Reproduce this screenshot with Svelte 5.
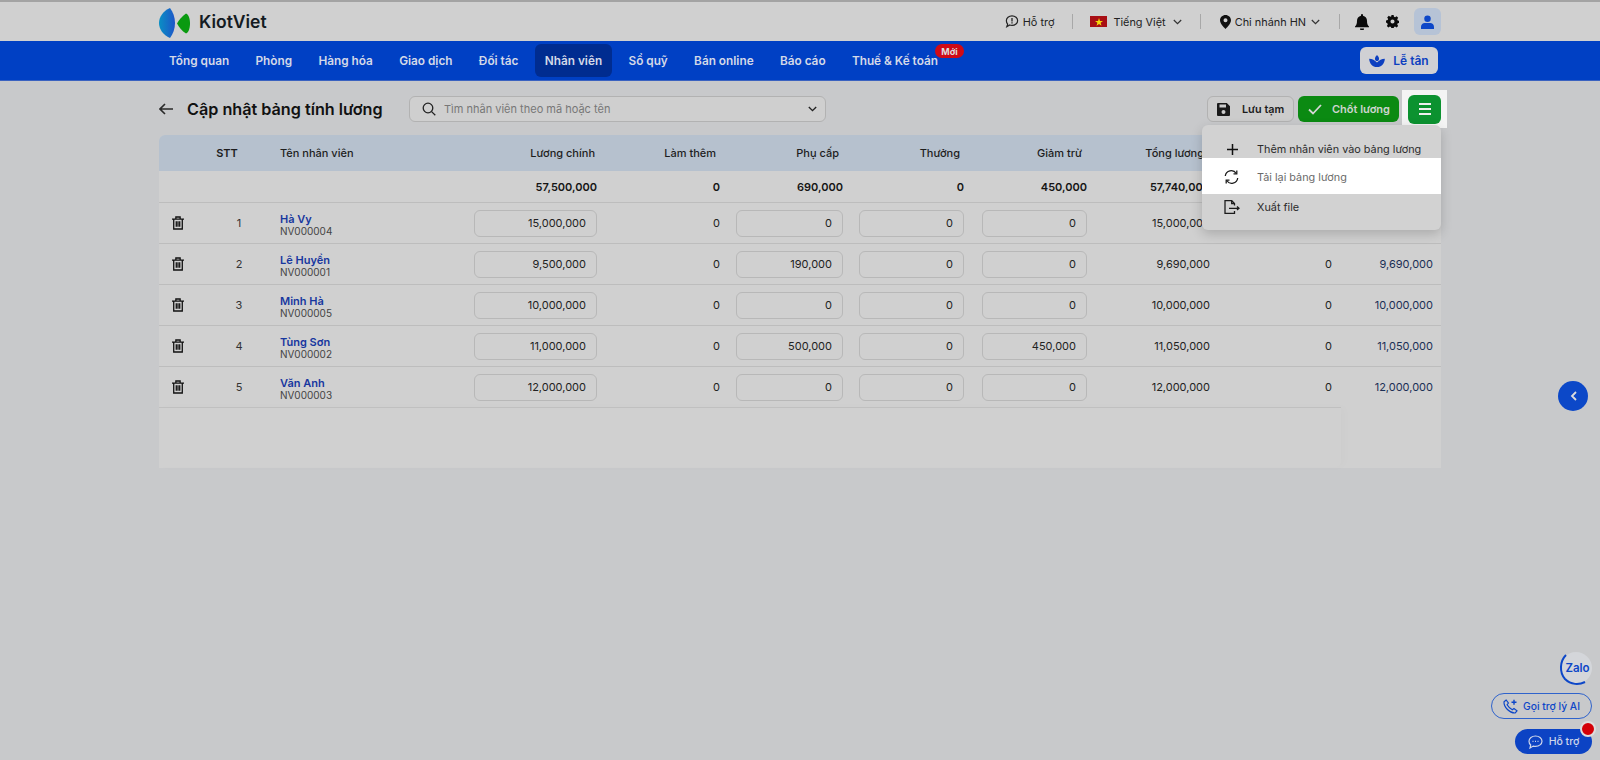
<script>
  const nav = ['Tổng quan','Phòng','Hàng hóa','Giao dịch','Đối tác','Nhân viên','Sổ quỹ','Bán online','Báo cáo','Thuế & Kế toán'];
  const rows = [
    {n:1,name:'Hà Vy',code:'NV000004',main:'15,000,000',extra:'0',sum:'15,000,000',ded:'0',total:'15,000,000'},
    {n:2,name:'Lê Huyền',code:'NV000001',main:'9,500,000',extra:'190,000',sum:'9,690,000',ded:'0',total:'9,690,000'},
    {n:3,name:'Minh Hà',code:'NV000005',main:'10,000,000',extra:'0',sum:'10,000,000',ded:'0',total:'10,000,000'},
    {n:4,name:'Tùng Sơn',code:'NV000002',main:'11,000,000',extra:'500,000',sum:'11,050,000',ded:'450,000',total:'11,050,000'},
    {n:5,name:'Văn Anh',code:'NV000003',main:'12,000,000',extra:'0',sum:'12,000,000',ded:'0',total:'12,000,000'}
  ];
</script>

<div class="page">
  <header class="top">
    <div class="wrap top-in">
      <div class="logo">
        <svg width="32" height="31" viewBox="0 0 32 31">
          <defs><linearGradient id="lg" x1="0" y1="0" x2="1" y2="0"><stop offset="0" stop-color="#0a8fc4"/><stop offset="1" stop-color="#1d55c8"/></linearGradient></defs>
          <path d="M11 0C4 3 0 9 0 15s4 12 11 15c3-4 5-9 5-15S14 4 11 0z" fill="url(#lg)"/>
          <path d="M27 5.500C23 8 20 12 18 15.500 20 19 23 23 27 25.500 29.500 25 31 20 31 15.500S29.500 6 27 5.500z" fill="#0a9a10"/>
        </svg>
        <span>KiotViet</span>
      </div>
      <div class="tools">
        <span class="tool t-help">
          <svg width="14" height="13" viewBox="0 0 16 15" fill="none" stroke="#222" stroke-width="1.400"><path d="M8 1c3.600 0 6.500 2.400 6.500 5.500S11.600 12 8 12c-.9 0-1.800-.15-2.600-.45L2 13.500l1-3C2 9.300 1.500 7.900 1.500 6.500 1.500 3.400 4.400 1 8 1z"/><path d="M8 3.600v3.800M8 8.500v1.300" stroke-width="1.500"/></svg>
          Hỗ trợ
        </span>
        <i class="sep"></i>
        <span class="tool t-lang">
          <span class="flag"><svg width="8" height="8" viewBox="0 0 10 10"><path d="M5 0l1.200 3.600H10L7 5.900 8.100 9.600 5 7.400 1.900 9.600 3 5.900 0 3.600h3.800z" fill="#f5d90a"/></svg></span>
          Tiếng Việt
          <svg class="chev" width="9" height="6" viewBox="0 0 11 7" fill="none" stroke="#333" stroke-width="1.500"><path d="M1 1l4.500 4.500L10 1"/></svg>
        </span>
        <i class="sep s2"></i>
        <span class="tool t-branch">
          <svg width="11" height="14" viewBox="0 0 11 14"><path fill-rule="evenodd" d="M5.500 0C2.500 0 0 2.400 0 5.300 0 9 5.500 14 5.500 14S11 9 11 5.300C11 2.400 8.500 0 5.500 0zm0 7.300a2 2 0 110-4 2 2 0 010 4z" fill="#111"/></svg>
          Chi nhánh HN
          <svg class="chev" width="9" height="6" viewBox="0 0 11 7" fill="none" stroke="#333" stroke-width="1.500"><path d="M1 1l4.500 4.500L10 1"/></svg>
        </span>
        <i class="sep s3"></i>
        <svg class="bell" width="14" height="16" viewBox="0 0 14 16"><path d="M7 0a1 1 0 011 1v.7c2.500.5 4 2.500 4 5 0 3 .6 4.300 2 5.800v.7H0v-.7c1.400-1.500 2-2.800 2-5.800 0-2.500 1.500-4.500 4-5V1a1 1 0 011-1zM5 14.500h4a2 2 0 01-4 0z" fill="#0b0b0b"/></svg>
        <svg class="gear" width="13" height="13" viewBox="0 0 14 14"><path fill-rule="evenodd" d="M5.800 0h2.400l.4 1.800 1.200.5 1.600-1 1.700 1.700-1 1.600.5 1.200 1.800.4v2.400l-1.800.4-.5 1.200 1 1.600-1.700 1.700-1.600-1-1.200.5-.4 1.800H5.800l-.4-1.800-1.200-.5-1.600 1-1.700-1.700 1-1.600-.5-1.200L0 8.200V5.800l1.800-.4.500-1.200-1-1.600L3 .9l1.600 1 1.200-.5zM7 4.800a2.200 2.200 0 100 4.400 2.200 2.200 0 000-4.400z" fill="#0b0b0b"/></svg>
        <span class="avatar">
          <svg width="13" height="14" viewBox="0 0 14 15"><circle cx="7" cy="4" r="3.500" fill="#0d47c8"/><path d="M0 15v-2.500C0 10 2 8.500 4 8.500h6c2 0 4 1.500 4 4V15z" fill="#0d47c8"/></svg>
        </span>
      </div>
    </div>
  </header>

  <nav class="nav">
    <div class="wrap nav-in">
      <ul>
        {#each nav as item}
          <li class:active={item === 'Nhân viên'}>
            {item}
            {#if item === 'Thuế & Kế toán'}<b class="new">Mới</b>{/if}
          </li>
        {/each}
      </ul>
      <span class="reception">
        <svg width="16" height="12" viewBox="0 0 17 13"><path d="M8.500 0c1.300 1.300 2.200 2.700 2.200 4.200 0 1.300-1 2.400-2.200 2.400S6.300 5.500 6.300 4.200C6.300 2.700 7.200 1.300 8.500 0z" fill="#0d3fc0"/><path d="M0 4c3.500 0 6 1.500 8.500 4C11 5.500 13.500 4 17 4c-.3 5-3.500 9-8.500 9S.3 9 0 4z" fill="#0d3fc0"/></svg>
        Lễ tân
      </span>
    </div>
  </nav>

  <main class="wrap">
    <div class="titlebar">
      <svg class="back" width="14" height="12" viewBox="0 0 14 12" fill="none" stroke="#2a2a2a" stroke-width="1.600"><path d="M14 6H1.500M6 1L1 6l5 5"/></svg>
      <h1>Cập nhật bảng tính lương</h1>
      <div class="search">
        <svg width="14" height="14" viewBox="0 0 14 14" fill="none" stroke="#222" stroke-width="1.300"><circle cx="6" cy="6" r="4.800"/><path d="M9.600 9.600L13.300 13.300"/></svg>
        <span>Tìm nhân viên theo mã hoặc tên</span>
        <svg class="chev" width="9" height="6" viewBox="0 0 11 7" fill="none" stroke="#222" stroke-width="1.700"><path d="M1 1l4.500 4.500L10 1"/></svg>
      </div>
      <div class="actions">
        <span class="btn save">
          <svg width="13" height="13" viewBox="0 0 13 13"><path fill-rule="evenodd" d="M1 0h8.800L13 3.200V12a1 1 0 01-1 1H1a1 1 0 01-1-1V1a1 1 0 011-1zm1.500 1.500v3h6.500v-3zM6.500 7a2 2 0 100 4 2 2 0 000-4z" fill="#1a1a1a"/></svg>
          Lưu tạm
        </span>
        <span class="btn done">
          <svg width="14" height="11" viewBox="0 0 14 11" fill="none" stroke="#d6d6d6" stroke-width="1.800"><path d="M1 5.500L5 9.500 13 1"/></svg>
          Chốt lương
        </span>
        <span class="spot">
          <span class="burger"><i></i><i></i><i></i></span>
        </span>
      </div>
    </div>

    <section class="table">
      <div class="row head">
        <div></div><div class="c">STT</div><div class="nm">Tên nhân viên</div>
        <div class="r">Lương chính</div><div class="r">Làm thêm</div><div class="r">Phụ cấp</div><div class="r">Thưởng</div><div class="r">Giảm trừ</div><div class="r">Tổng lương</div>
      </div>
      <div class="row totals">
        <div></div><div></div><div></div>
        <div class="v">57,500,000</div><div class="v">0</div><div class="v">690,000</div><div class="v">0</div><div class="v">450,000</div><div class="v">57,740,000</div><div class="v">0</div><div class="v">57,740,000</div>
      </div>
      {#each rows as r}
        <div class="row item">
          <div class="trash">
            <svg width="12" height="14" viewBox="0 0 14 16" fill="none" stroke="#111" stroke-width="1.500"><path d="M0 3.500h14M4.500 3.500V1h5v2.500M2 3.500V15h10V3.500"/><path d="M5 6v6.500M7 6v6.500M9 6v6.500"/></svg>
          </div>
          <div class="c n">{r.n}</div>
          <div class="nm"><a href="#top">{r.name}</a><small>{r.code}</small></div>
          <div class="v"><span class="inp wide">{r.main}</span></div>
          <div class="v">0</div>
          <div class="v"><span class="inp m">{r.extra}</span></div>
          <div class="v"><span class="inp">0</span></div>
          <div class="v"><span class="inp">{r.ded}</span></div>
          <div class="v">{r.sum}</div>
          <div class="v">0</div>
          <div class="v last">{r.total}</div>
        </div>
      {/each}
      <div class="blank"><div class="blank-left"></div></div>

      <div class="menu">
        <div class="mi first">
          <svg class="plus" width="11" height="11" viewBox="0 0 11 11" fill="none" stroke="#111" stroke-width="1.500"><path d="M5.500 0v11M0 5.500h11"/></svg>
          Thêm nhân viên vào bảng lương
        </div>
        <div class="mi hl">
          <svg width="15" height="14" viewBox="0 0 15 14" fill="none" stroke="#1c1c1c" stroke-width="1.300"><path d="M1.300 6A6 6 0 0112.300 3.500M13.700 8A6 6 0 012.700 10.500"/><path d="M12.800 .5v3.300H9.500M2.200 13.500v-3.300h3.300"/></svg>
          Tải lại bảng lương
        </div>
        <div class="mi">
          <svg width="16" height="14" viewBox="0 0 16 14" fill="none" stroke="#1c1c1c" stroke-width="1.300"><path d="M10.500 5.500V3.500L7.700 .7H1V13.300h9.500v-2.300"/><path d="M7.700 .7v3h2.800M5 8.300h10M13 6.500l2 1.800-2 1.800"/></svg>
          Xuất file
        </div>
      </div>
    </section>
  </main>

  <button class="side" aria-label="Mở">
    <svg width="7" height="10" viewBox="0 0 7 10" fill="none" stroke="#ddd" stroke-width="1.800"><path d="M6 1L2 5l4 4"/></svg>
  </button>

  <div class="float">
    <span class="zalo"><svg class="arc" width="34" height="34" viewBox="0 0 34 34" fill="none" stroke="#0d47c8" stroke-width="2"><path d="M7 3C1 9 0 20 6 27c6 6 14 6 20 3"/></svg><em>Zalo</em></span>
    <span class="ai">
      <svg width="15" height="15" viewBox="0 0 15 15" fill="none" stroke="#0d47c8" stroke-width="1.200"><path d="M3.200 1L1 2.800c-.3 5.400 5.700 11.500 11.200 11.200l1.800-2.200-3-2.300-1.700 1.300C7.800 10 5 7.200 4.100 5.700L5.400 4z"/><path d="M11 .8v5M8.500 3.300h5" stroke-width="1.400"/></svg>
      Gọi trợ lý AI
    </span>
    <span class="help">
      <svg width="15" height="14" viewBox="0 0 15 14" fill="none" stroke="#cfd6ea" stroke-width="1.200"><path d="M7.500 1c3.600 0 6.500 2.300 6.500 5.200s-2.900 5.200-6.500 5.200c-.8 0-1.600-.1-2.300-.3L2 13l.7-3C1.600 9 1 7.700 1 6.200 1 3.300 3.900 1 7.500 1z"/><path d="M4.500 6.300h1M7 6.300h1M9.500 6.300h1"/></svg>
      Hỗ trợ
      <b class="dot"></b>
    </span>
  </div>
</div>

<style>
  :global(body) { margin: 0; background: #c8c9cb; }
  .page { height: 760px; overflow: hidden; position: relative; font-family: Inter, "Noto Sans", sans-serif; color: #1a1a1a; background: #c8c9cb; font-size: 11px; }
  .wrap { width: 1282px; margin: 0 auto; }

  .top { height: 39px; background: #d0d0d0; border-top: 2px solid #a3a3a3; }
  .top-in { height: 39px; display: flex; align-items: center; justify-content: space-between; }
  .logo { display: flex; align-items: center; gap: 8px; }
  .logo svg { margin-top: 3px; }
  .logo span { font-size: 17.500px; font-weight: 600; color: #141b22; }
  .tools { display: flex; align-items: center; color: #222; font-size: 10.900px; }
  .tool { display: flex; align-items: center; gap: 4px; white-space: nowrap; }
  .t-lang { gap: 6px; }
  .t-branch { gap: 4px; }
  .sep { width: 1px; height: 15px; background: #a8a8a8; margin: 0 17px 0 18px; }
  .sep.s2 { margin: 0 19px 0 18px; }
  .sep.s3 { margin: 0 15px 0 19px; }
  .flag { width: 17px; height: 11px; background: #a80f14; display: flex; align-items: center; justify-content: center; }
  .chev { flex: none; }
  .tool .chev { margin-left: 1px; }
  .gear { margin-left: 17px; }
  .avatar { width: 27px; height: 27px; margin-left: 15px; border-radius: 6px; background: #b6c3d6; display: flex; align-items: center; justify-content: center; }

  .nav { height: 39px; background: #0040c4; border-bottom: 1px solid #3a62c0; }
  .nav-in { height: 39px; display: flex; align-items: center; justify-content: space-between; }
  .nav ul { list-style: none; margin: 0; padding: 0; display: flex; align-items: center; }
  .nav li { position: relative; height: 33px; padding: 0 10px; margin-right: 6.300px; display: flex; align-items: center; color: #d4d9e8; font-weight: 600; font-size: 11.800px; border-radius: 6px; white-space: nowrap; }
  .nav li.active { background: #002c90; }
  .new { position: absolute; right: -16px; top: 0; width: 29px; height: 14px; border-radius: 7px; background: #d00a16; color: #ddd; font-size: 9px; font-weight: 700; display: flex; align-items: center; justify-content: center; }
  .reception { height: 27px; width: 78px; margin-right: 3px; border-radius: 6px; background: #d0d0d4; display: flex; align-items: center; justify-content: center; gap: 8px; color: #0d3fc0; font-weight: 600; font-size: 12px; }

  .titlebar { height: 54px; box-sizing: border-box; padding-top: 2px; display: flex; align-items: center; position: relative; }
  h1 { margin: 0 0 0 14px; font-size: 16.200px; font-weight: 600; color: #111; width: 222px; white-space: nowrap; }
  .search { width: 417px; height: 26px; box-sizing: border-box; border: 1px solid #b2b2b2; border-radius: 6px; background: #cfcfcf; display: flex; align-items: center; padding: 0 8px 0 12px; gap: 8px; color: #777; font-size: 11px; }
  .search span { flex: 1; }
  .actions { margin-left: auto; display: flex; align-items: center; height: 26px; }
  .btn { height: 26px; box-sizing: border-box; border-radius: 6px; display: flex; align-items: center; font-weight: 600; font-size: 10.800px; white-space: nowrap; }
  .save { width: 87px; background: #cccccc; border: 1px solid #b2b2b2; padding-left: 9px; gap: 12px; color: #1c1c1c; }
  .done { width: 101px; margin-left: 4px; background: #0b8a12; color: #cfd4cf; padding-left: 10px; gap: 10px; font-size: 11px; }
  .spot { margin-left: 3px; margin-right: -6px; width: 45px; height: 38px; background: #f4f4f4; display: flex; align-items: center; justify-content: center; }
  .burger { width: 33px; height: 29px; border-radius: 6px; background: #0c9230; display: flex; flex-direction: column; align-items: center; justify-content: center; gap: 3px; }
  .burger i { width: 12px; height: 2px; background: #eee; }

  .table { position: relative; height: 333px; background: #d0d0d0; border-radius: 6px 6px 0 0; }
  .row { display: grid; grid-template-columns: 41px 62px 208px 127px 123px 123px 121px 123px 123px 122px 101px 8px; align-items: center; }
  .head { grid-template-columns: 41px 62px 208px 125px 121px 123px 121px 122px 122px; height: 36px; background: #b6c1ce; border-radius: 6px 6px 0 0; font-weight: 500; color: #1d1d1d; }
  .head .r { text-align: right; white-space: nowrap; }
  .c { text-align: center; }
  .head .c { font-weight: 600; padding-right: 8px; }
  .nm { padding-left: 18px; }
  .n { color: #333; padding-left: 16px; }
  .totals { height: 32px; box-sizing: border-box; border-bottom: 1px solid #bdbdbd; }
  .v { text-align: right; white-space: nowrap; color: #222; }
  .totals .v { font-weight: 600; color: #151515; }
  .item { height: 41px; box-sizing: border-box; border-bottom: 1px solid #bdbdbd; }
  .item:nth-last-child(3) { border-bottom: 0; height: 40px; }
  .trash { display: flex; justify-content: center; padding-right: 4px; }
  .item .nm { padding-top: 5px; }
  .nm a { display: block; color: #17379f; font-weight: 600; line-height: 11px; text-decoration: none; }
  .nm small { display: block; color: #444; font-size: 10px; line-height: 13px; }
  .inp { display: inline-block; box-sizing: border-box; width: 105px; height: 27px; line-height: 25px; padding-right: 10px; border: 1px solid #b8b8b8; border-radius: 6px; background: #d0d0d0; text-align: right; }
  .inp.wide { width: 123px; }
  .inp.m { width: 107px; }
  .last { color: #1b2f55; }
  .blank { height: 60px; }
  .blank-left { width: 1182px; height: 60px; border-radius: 0 0 6px 0; box-shadow: 4px 0 8px rgba(0,0,0,.015); border-top: 1px solid #c0c0c0; box-sizing: border-box; }

  .menu { position: absolute; right: 0; top: -10px; width: 239px; height: 105px; background: #d2d2d2; border-radius: 6px; box-shadow: 0 4px 12px rgba(0,0,0,.18); padding-top: 13px; box-sizing: border-box; color: #2b2b2b; font-size: 10.850px; z-index: 2; }
  .mi { height: 20px; display: flex; align-items: center; position: relative; padding-left: 55px; white-space: nowrap; }
  .mi svg { position: absolute; left: 22px; }
  .mi svg.plus { left: 25px; }
  .mi.first { padding-top: 2px; box-sizing: border-box; }
  .mi.hl { height: 36px; background: #fff; color: #6a6a6a; padding-top: 2px; box-sizing: border-box; }
  .mi:last-child { height: 26px; }

  .side { position: absolute; left: 1558px; top: 381px; width: 30px; height: 30px; padding: 0; border: 0; border-radius: 50%; background: #0c48c8; display: flex; align-items: center; justify-content: center; }

  .float { position: absolute; right: 8px; bottom: 6px; display: flex; flex-direction: column; align-items: flex-end; }
  .zalo { position: relative; width: 32px; height: 32px; border-radius: 50%; background: #d4d6da; display: flex; align-items: center; justify-content: center; margin-bottom: 9px; }
  .zalo em { font-style: normal; font-weight: 600; font-size: 11.500px; color: #0d47c8; padding-left: 3px; }
  .arc { position: absolute; left: -1px; top: 0; }
  .ai { width: 101px; height: 26px; box-sizing: border-box; border: 1px solid #2f63cc; border-radius: 13px; display: flex; align-items: center; justify-content: center; gap: 5px; color: #0d47c8; font-size: 10.300px; font-weight: 500; white-space: nowrap; margin-bottom: 10px; }
  .help { position: relative; width: 77px; height: 25px; border-radius: 13px; background: #0c43c4; color: #cfd6ea; display: flex; align-items: center; justify-content: center; gap: 6px; font-size: 10.500px; font-weight: 500; }
  .dot { position: absolute; right: -4px; top: -8px; width: 12px; height: 12px; border-radius: 50%; background: #d40008; border: 2px solid #ddd; }
</style>
